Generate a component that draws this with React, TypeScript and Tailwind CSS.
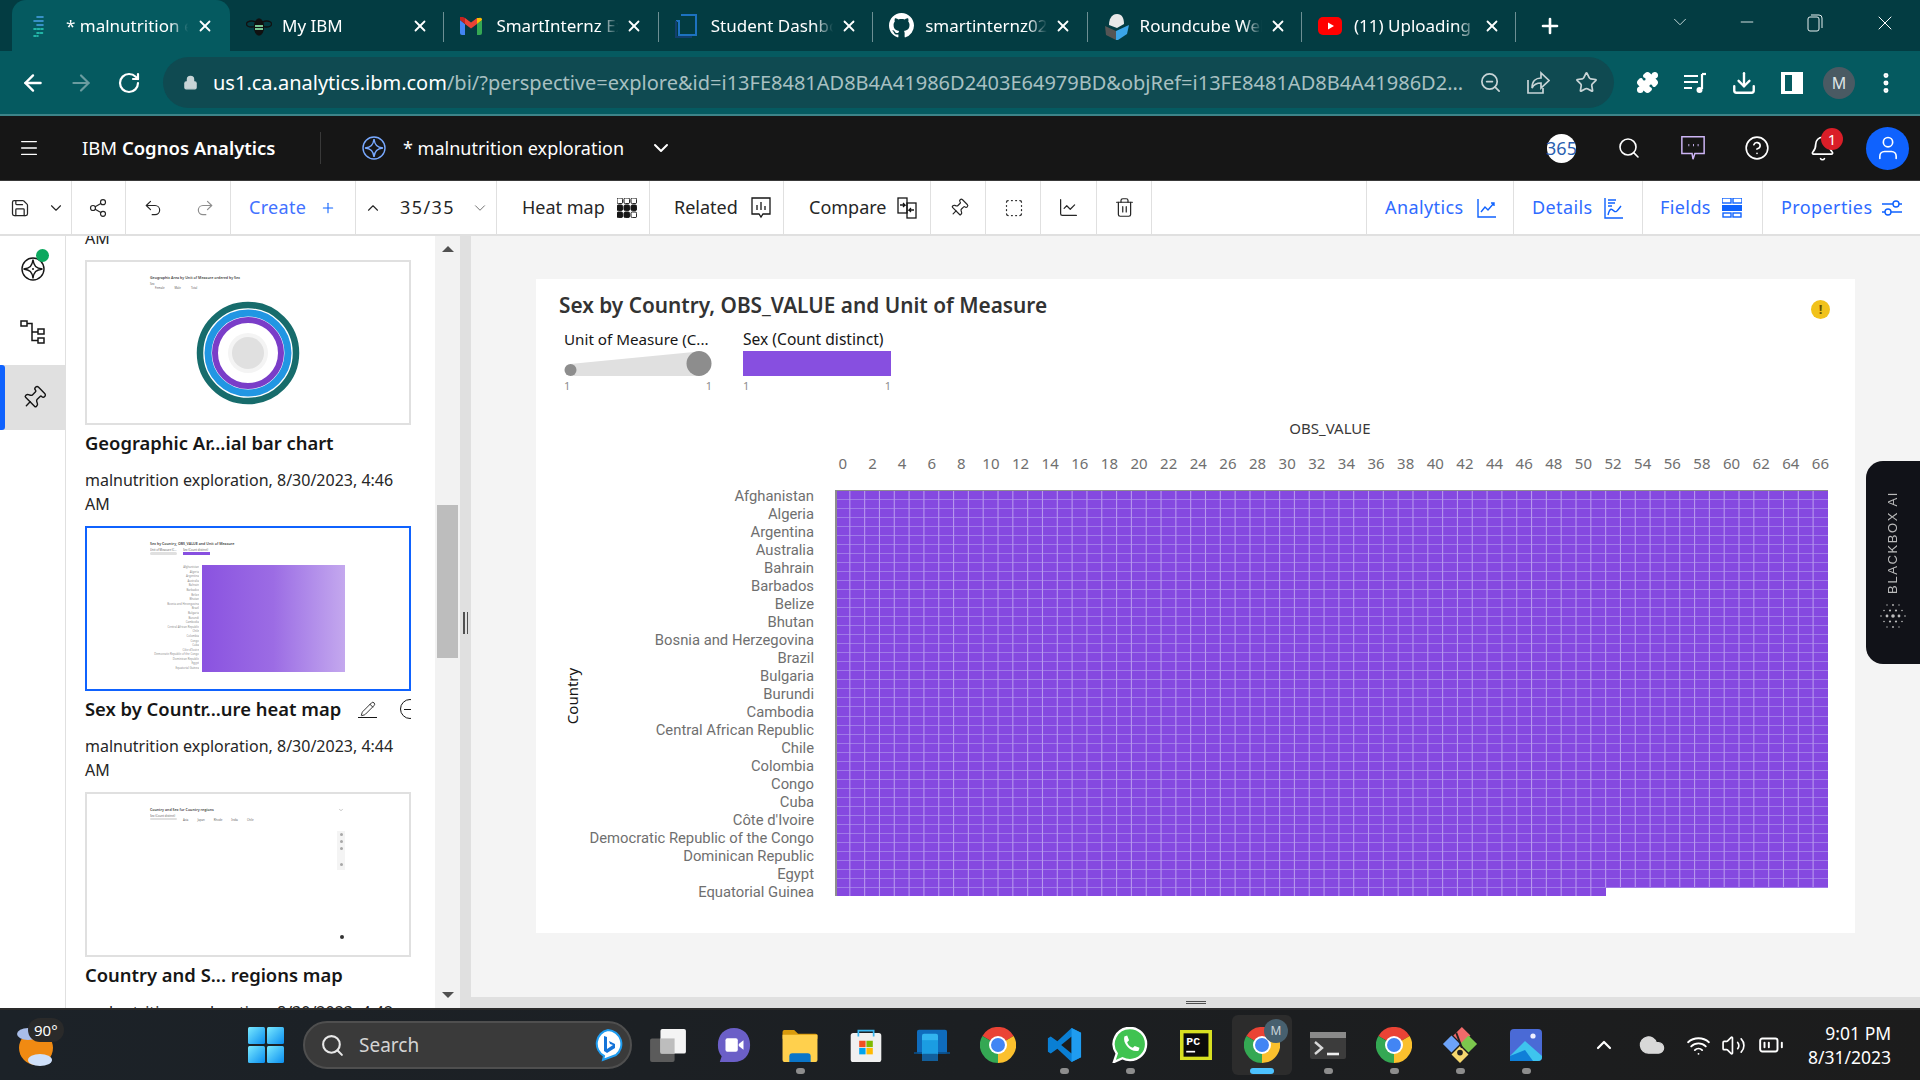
import React from "react";
import {
  ArrowLeft, ArrowRight, RotateCw, Lock, ZoomOut, Star, Puzzle, Download, MoreVertical, Menu, ChevronDown, ChevronUp,
  Search, HelpCircle, Bell, User, Share2, Undo2, Redo2, Plus, Pin, SquareDashed, ChartLine, Trash2, X, Minus,
  Save, Pencil, Wifi, Volume2, BatteryMedium, Cloud,
} from "lucide-react";

const countries = ["Afghanistan","Algeria","Argentina","Australia","Bahrain","Barbados","Belize","Bhutan","Bosnia and Herzegovina","Brazil","Bulgaria","Burundi","Cambodia","Central African Republic","Chile","Colombia","Congo","Cuba","Côte d'Ivoire","Democratic Republic of the Congo","Dominican Republic","Egypt","Equatorial Guinea"];

function ChromeLogo({ size = 36 }: { size?: number }) {
  return (
    <svg width={size} height={size} viewBox="0 0 32 32">
      <path d="M16 16 L2.1 8 A16 16 0 0 1 29.9 8 Z" fill="#ea4335" />
      <path d="M16 16 L29.9 8 A16 16 0 0 1 16 32 Z" fill="#fbc02d" />
      <path d="M16 16 L16 32 A16 16 0 0 1 2.1 8 Z" fill="#34a853" />
      <circle cx="16" cy="16" r="8" fill="#fff" />
      <circle cx="16" cy="16" r="6.2" fill="#4285f4" />
    </svg>
  );
}

function CognosFav() {
  return (
    <svg width="16" height="22" viewBox="0 0 16 22" fill="none" strokeLinecap="round" strokeWidth="1.6">
      <path d="M6 2h6M3 6h9M6 10h6" stroke="#4aa3e8" />
      <path d="M3 14h9M6 18h6M3 21h4" stroke="#2dd4bf" strokeDasharray="2 1.5" />
    </svg>
  );
}

function Bee() {
  return (
    <svg width="26" height="22" viewBox="0 0 26 22" fill="none" stroke="#111" strokeWidth="1.3">
      <ellipse cx="13" cy="12" rx="4.5" ry="8" fill="#111" />
      <ellipse cx="5.5" cy="9" rx="5" ry="3" />
      <ellipse cx="20.5" cy="9" rx="5" ry="3" />
      <path d="M9 11h8M9 14h8" stroke="#9fb" />
    </svg>
  );
}

function Gmail() {
  return (
    <svg width="22" height="18" viewBox="0 0 22 18">
      <path d="M0 3v13a2 2 0 0 0 2 2h3V7z" fill="#4285f4" />
      <path d="M22 3v13a2 2 0 0 1-2 2h-3V7z" fill="#34a853" />
      <path d="M0 3l5 4v-6l-2-1A2 2 0 0 0 0 3z" fill="#c5221f" />
      <path d="M5 1v6l6 4.5L17 7V1l-6 4.5z" fill="#ea4335" />
      <path d="M17 1v6l5-4a2 2 0 0 0-3-2z" fill="#fbbc04" />
    </svg>
  );
}

function Dash() {
  return (
    <svg width="24" height="26" viewBox="0 0 24 26" fill="none" stroke="#1d72c0" strokeWidth="2">
      <path d="M6 2h15v20H4V8H1" />
      <path d="M1 8v16h16" stroke="#123f6d" />
    </svg>
  );
}

function Github() {
  return (
    <svg width="25" height="25" viewBox="0 0 16 16" fill="#fff">
      <path d="M8 0C3.58 0 0 3.58 0 8c0 3.54 2.29 6.53 5.47 7.59.4.07.55-.17.55-.38 0-.19-.01-.82-.01-1.49-2.01.37-2.53-.49-2.69-.94-.09-.23-.48-.94-.82-1.13-.28-.15-.68-.52-.01-.53.63-.01 1.08.58 1.23.82.72 1.21 1.87.87 2.33.66.07-.52.28-.87.51-1.07-1.78-.2-3.64-.89-3.64-3.95 0-.87.31-1.59.82-2.15-.08-.2-.36-1.02.08-2.12 0 0 .67-.21 2.2.82.64-.18 1.32-.27 2-.27s1.36.09 2 .27c1.53-1.04 2.2-.82 2.2-.82.44 1.1.16 1.92.08 2.12.51.56.82 1.27.82 2.15 0 3.07-1.87 3.75-3.65 3.95.29.25.54.73.54 1.48 0 1.07-.01 1.93-.01 2.2 0 .21.15.46.55.38A8.01 8.01 0 0 0 16 8c0-4.42-3.58-8-8-8z" />
    </svg>
  );
}

function Round() {
  return (
    <svg width="26" height="28" viewBox="0 0 26 28">
      <path d="M13 2c6 0 7 6 7 10l-7 4-8-3C5 8 7 2 13 2z" fill="#e8e8e8" />
      <path d="M1 14l11 5v9L2 23z" fill="#555" />
      <path d="M12 19l13-6-2 9-9 6h-2z" fill="#3ba5e8" />
    </svg>
  );
}

function YouTube() {
  return (
    <svg width="24" height="18" viewBox="0 0 24 18">
      <rect width="24" height="18" rx="5" fill="#f00" />
      <path d="M10 5.5l6 3.5-6 3.5z" fill="#fff" />
    </svg>
  );
}

function Tab({ icon, title, active, sep = true }: { icon: React.ReactNode; title: string; active?: boolean; sep?: boolean }) {
  return (
    <div className={active ? "relative w-[218px] h-[51px] mt-0 flex items-center bg-[#055a60] rounded-t-[14px]" : "relative w-[214.4px] h-[51px] flex items-center"}>
      <div className={active ? "w-[54px] pl-[19px] flex items-center shrink-0" : "w-[52px] pl-[16px] flex items-center shrink-0"}>{icon}</div>
      <div className="w-[126px] overflow-hidden whitespace-nowrap text-[17px] text-white [mask-image:linear-gradient(to_right,black_82%,transparent_97%)]">{title}</div>
      <X size={18} strokeWidth={2.4} className={active ? "ml-[4px] text-white" : "ml-[3px] text-white"} />
      {sep && !active && <div className="absolute right-0 top-[12px] h-[30px] w-px bg-[#6d8f93]" />}
    </div>
  );
}

function HeatIcon() {
  const d = [0, 1, 2];
  return (
    <svg width="20" height="20" viewBox="0 0 20 20">
      {d.map((r) => d.map((c) => (
        <rect key={`${r}${c}`} x={c * 7} y={r * 7} width="5.6" height="5.6" rx="1.4" fill={r === 1 || (r === 2 && c < 2) ? "#161616" : "none"} stroke="#161616" strokeWidth="1" />
      )))}
    </svg>
  );
}

function RelatedIcon() {
  return (
    <svg width="20" height="22" viewBox="0 0 20 22" fill="none" stroke="#161616" strokeWidth="1.3">
      <path d="M1 1h18v16H12l-2 3-2-3H1z" />
      <path d="M6 13V8M10 13V5M14 13V9" />
    </svg>
  );
}

function CompareIcon() {
  return (
    <svg width="20" height="22" viewBox="0 0 20 22" fill="none" stroke="#161616" strokeWidth="1.3">
      <rect x="1" y="1" width="9" height="15" />
      <rect x="10" y="6" width="9" height="15" />
      <path d="M3 8h5l-2-2M8 8l-2 2M17 13h-5l2-2M12 13l2 2" />
    </svg>
  );
}

function ToolCell({ w, children, line = true }: { w: string; children: React.ReactNode; line?: boolean }) {
  return <div className={`${w} ${line ? "border-r border-[#e0e0e0]" : ""} h-full flex items-center shrink-0`}>{children}</div>;
}

function AnalyticsIcon() {
  return (
    <svg width="20" height="20" viewBox="0 0 20 20" fill="none" stroke="#0f62fe" strokeWidth="1.4">
      <path d="M1 1v18h18" />
      <path d="M4 14l4-5 3 3 6-7M14 5h3v3" />
    </svg>
  );
}

function DetailsIcon() {
  return (
    <svg width="20" height="22" viewBox="0 0 20 22" fill="none" stroke="#0f62fe" strokeWidth="1.4">
      <path d="M1 1v20h18" />
      <path d="M4 3h8M4 6h7M4 9h4M4 18c2-8 4-6 6-4s4-1 7-5" />
    </svg>
  );
}

function FieldsIcon() {
  return (
    <svg width="20" height="20" viewBox="0 0 20 20">
      <rect x="0" y="0" width="9" height="5" fill="none" stroke="#0f62fe" strokeWidth="1.4" />
      <rect x="11" y="0" width="9" height="5" fill="none" stroke="#0f62fe" strokeWidth="1.4" />
      <rect x="0" y="7" width="20" height="6" fill="#0f62fe" />
      <rect x="1" y="15" width="8" height="4" fill="none" stroke="#0f62fe" strokeWidth="1.4" />
      <rect x="11" y="15" width="8" height="4" fill="none" stroke="#0f62fe" strokeWidth="1.4" />
    </svg>
  );
}

function PropertiesIcon() {
  return (
    <svg width="20" height="18" viewBox="0 0 20 18" fill="none" stroke="#0f62fe" strokeWidth="1.4">
      <path d="M0 5h11M17 5h3" />
      <circle cx="14" cy="5" r="3" />
      <path d="M0 13h3M9 13h11" />
      <circle cx="6" cy="13" r="3" />
    </svg>
  );
}

function Heatmap() {
  const W = 14.82;
  const H = 9.02;
  const v = Array.from({ length: 66 }, (_, i) => (i + 1) * W);
  const h = Array.from({ length: 44 }, (_, i) => Math.round((i + 1) * H) + 0.5);
  return (
    <svg width="993" height="407" viewBox="0 0 993 407" className="block">
      <path d="M0 0H993V397H771V406H0Z" fill="#8549e0" />
      {h.map((y) => (
        <line key={y} x1={0} x2={993} y1={y} y2={y} stroke="#a07ae8" strokeWidth="1" />
      ))}
      {v.map((x, i) => (
        <line key={x} x1={x} x2={x} y1={0} y2={i < 51 ? 406 : 397} stroke="#b797ee" strokeWidth="1.1" />
      ))}
      <rect x="0" y="0" width="2" height="406" fill="#8d8d8d" />
      <rect x="0" y="0" width="993" height="1" fill="#8d8d8d" />
    </svg>
  );
}

function Thumb({ selected, children }: { selected?: boolean; children: React.ReactNode }) {
  return <div className={selected ? "w-[326px] h-[165px] border-2 border-[#0f62fe] bg-white overflow-hidden" : "w-[326px] h-[165px] border-2 border-[#e0e0e0] bg-white overflow-hidden"}>{children}</div>;
}

function Thumb1() {
  return (
    <div className="pl-[63px] pt-[13px] relative h-full">
      <div className="text-[3.6px] leading-[5px] font-semibold text-[#444] whitespace-nowrap">Geographic Area by Unit of Measure ordered by Sex</div>
      <div className="text-[2.8px] leading-[4px] text-[#666] mt-[2px]">Sex</div>
      <div className="text-[2.8px] leading-[4px] text-[#666] flex gap-[10px] pl-[5px]"><span>Female</span><span>Male</span><span>Total</span></div>
      <svg width="104" height="104" viewBox="0 0 104 104" className="absolute left-[109px] top-[39px]">
        <circle cx="52" cy="52" r="48" fill="none" stroke="#176c6c" strokeWidth="6.5" />
        <circle cx="52" cy="52" r="40" fill="none" stroke="#2196e3" strokeWidth="7" />
        <circle cx="52" cy="52" r="33" fill="none" stroke="#7a3dc8" strokeWidth="6" />
        <circle cx="52" cy="52" r="20" fill="#f4f4f4" />
        <circle cx="52" cy="52" r="16" fill="#e0e0e0" />
      </svg>
    </div>
  );
}

function Thumb2() {
  return (
    <div className="pl-[63px] pt-[13px]">
      <div className="text-[3.6px] leading-[5px] font-semibold text-[#444] whitespace-nowrap">Sex by Country, OBS_VALUE and Unit of Measure</div>
      <div className="flex gap-[6px] mt-[2px]">
        <div className="w-[27px] text-[2.8px] leading-[4px] text-[#666] whitespace-nowrap overflow-hidden">Unit of Measure (C...<div className="h-[3px] bg-[#e0e0e0] rounded-full" /></div>
        <div className="w-[27px] text-[2.8px] leading-[4px] text-[#666] whitespace-nowrap overflow-hidden">Sex (Count distinct)<div className="h-[3px] bg-[#874fe0]" /></div>
      </div>
      <div className="flex mt-[10px]">
        <div className="w-[49px] text-right text-[2.8px] leading-[4.6px] text-[#8d8d8d] whitespace-nowrap h-[107px] overflow-hidden">
          {countries.map((c) => <div key={c}>{c}</div>)}
        </div>
        <div className="ml-[3px] w-[143px] h-[107px] bg-gradient-to-r from-[#8a52e0] via-[#9c6ce4] to-[#c4a8ee]" />
      </div>
    </div>
  );
}

function Thumb3() {
  return (
    <div className="pl-[63px] pt-[13px] relative h-full">
      <div className="text-[3.6px] leading-[5px] font-semibold text-[#444] whitespace-nowrap">Country and Sex for Country regions</div>
      <div className="flex gap-[6px] mt-[2px] text-[2.8px] leading-[4px] text-[#666]">
        <div className="w-[27px] whitespace-nowrap overflow-hidden">Sex (Count distinct)<div className="h-[2px] bg-[#e0e0e0] rounded-full" /></div>
        <div className="flex gap-[9px] pt-[4px] whitespace-nowrap"><span>Asia</span><span>Japan</span><span>Rhode</span><span>India</span><span>Chile</span></div>
      </div>
      <ChevronDown size={6} strokeWidth={2} className="absolute left-[251px] top-[13px] text-[#8d8d8d]" />
      <div className="absolute left-[250px] top-[37px] w-[8px] h-[39px] bg-[#f4f4f4] flex flex-col items-center gap-[4px] pt-[2px]">
        <div className="w-[3px] h-[3px] rounded-full bg-[#a8a8a8]" />
        <div className="w-[3px] h-[3px] rounded-full bg-[#a8a8a8]" />
        <div className="w-[3px] h-[3px] rounded-full bg-[#a8a8a8]" />
        <div className="w-[3px] h-[3px] rounded-full bg-[#a8a8a8] mt-[9px]" />
      </div>
      <div className="absolute left-[253px] top-[141px] w-[4px] h-[4px] rounded-full bg-[#333]" />
    </div>
  );
}

function PanelItem({ title, meta, selected, children }: { title: string; meta: string; selected?: boolean; children: React.ReactNode }) {
  return (
    <div className="w-[326px]">
      <Thumb selected={selected}>{children}</Thumb>
      <div className="mt-[6px] h-[24px] flex items-center text-[18.4px] font-semibold leading-[24px] text-[#161616] whitespace-nowrap">
        <span className="w-[273px] shrink-0">{title}</span>
        {selected && (
          <span className="flex items-center overflow-hidden w-[53px]">
            <span className="flex flex-col items-center shrink-0"><Pencil size={16} strokeWidth={1.3} className="text-[#161616]" /><span className="block w-[19px] h-px bg-[#161616]" /></span>
            <span className="ml-[23px] w-[20px] h-[20px] shrink-0 rounded-full border-[1.5px] border-[#161616] flex items-center"><span className="ml-[3px] w-[11px] h-px bg-[#161616]" /></span>
          </span>
        )}
      </div>
      <div className="mt-[13px] text-[16px] leading-[24px] text-[#262626]">{meta}</div>
    </div>
  );
}

function TBCell({ children, dot, active }: { children: React.ReactNode; dot?: boolean; active?: boolean }) {
  return (
    <div className="relative w-[66px] h-[60px] shrink-0 flex items-center justify-center">
      {active && <div className="absolute left-[3px] top-0 w-[60px] h-[60px] rounded-[6px] bg-[#2c2c2c]" />}
      <div className="relative">{children}</div>
      {dot && <div className="absolute bottom-[1px] left-[29px] w-[9px] h-[6px] rounded-full bg-[#8d8d8d]" />}
      {active && <div className="absolute bottom-[1px] left-[21px] w-[24px] h-[6px] rounded-full bg-[#4cc2ff]" />}
    </div>
  );
}

function Taskbar() {
  return (
    <div className="h-[72px] shrink-0 flex items-center bg-gradient-to-r from-[#1c2228] via-[#1c1f22] to-[#1c1c1c] border-t-2 border-[#2a2a2a] text-white font-['Noto_Sans',sans-serif]">
      <div className="w-[248px] h-full relative shrink-0">
        <svg width="40" height="42" viewBox="0 0 40 42" className="absolute left-[14px] top-[16px]">
          <circle cx="22" cy="22" r="17" fill="#f08a12" />
          <ellipse cx="14" cy="8" rx="11" ry="6" fill="#a9bde8" />
          <ellipse cx="26" cy="34" rx="12" ry="6" fill="#cfe0fa" />
        </svg>
        <div className="absolute left-[28px] top-[8px] h-[24px] px-[6px] rounded-full bg-[#2a2a2a] text-[15px] leading-[24px]">90°</div>
      </div>
      <svg width="36" height="36" viewBox="0 0 36 36" className="shrink-0">
        <defs>
          <linearGradient id="wl" x1="0" y1="0" x2="1" y2="1"><stop offset="0" stopColor="#7aeaff" /><stop offset="1" stopColor="#0a8ef0" /></linearGradient>
        </defs>
        <rect x="0" y="0" width="17" height="17" rx="1.5" fill="url(#wl)" />
        <rect x="19" y="0" width="17" height="17" rx="1.5" fill="url(#wl)" />
        <rect x="0" y="19" width="17" height="17" rx="1.5" fill="url(#wl)" />
        <rect x="19" y="19" width="17" height="17" rx="1.5" fill="url(#wl)" />
      </svg>
      <div className="ml-[19px] w-[329px] h-[48px] shrink-0 rounded-full bg-[#3a3a3a] border-2 border-[#4f4f4f] flex items-center pl-[15px] pr-[7px]">
        <Search size={25} strokeWidth={2} className="text-[#e8e8e8]" />
        <span className="ml-[14px] text-[19px] text-[#d4d4d4]">Search</span>
        <svg width="30" height="34" viewBox="0 0 30 34" className="ml-auto">
          <path d="M15 2a14 14 0 0 1 8 25l-13 5 1-4A14 14 0 0 1 15 2z" fill="#fff" stroke="#1f9cf0" strokeWidth="2" />
          <path d="M11 8l3 1v12l6-4-3-1-1-3 6 3v4l-8 5-3-2z" fill="#1473d8" />
        </svg>
      </div>
      <div className="ml-[3px] flex items-center shrink-0">
        <TBCell>
          <svg width="36" height="33" viewBox="0 0 38 35"><rect x="0" y="10" width="26" height="25" rx="2" fill="#5b5b5b" /><rect x="11" y="0" width="27" height="26" rx="2" fill="#f4f4f4" /><rect x="11" y="10" width="15" height="16" fill="#bdbdbd" /></svg>
        </TBCell>
        <TBCell>
          <svg width="34" height="36" viewBox="0 0 34 38"><path d="M17 1c10 0 17 7 17 18s-7 18-17 18H2l2-6C1 27 0 24 0 19 0 8 7 1 17 1z" fill="#6b5fc7" /><rect x="8" y="12" width="13" height="14" rx="2" fill="#fff" /><path d="M22 18l5-4v10l-5-4z" fill="#fff" /></svg>
        </TBCell>
        <TBCell dot>
          <svg width="36" height="33" viewBox="0 0 36 34"><path d="M0 3a2 2 0 0 1 2-2h10l4 4h18a2 2 0 0 1 2 2v3H0z" fill="#d99a0b" /><path d="M0 6h36v26a2 2 0 0 1-2 2H2a2 2 0 0 1-2-2z" fill="#ffd04d" /><path d="M7 34v-6a3 3 0 0 1 3-3h16a3 3 0 0 1 3 3v6z" fill="#0a75c8" /></svg>
        </TBCell>
        <TBCell>
          <svg width="36" height="34" viewBox="0 0 36 40"><rect y="6" width="36" height="34" rx="3" fill="#f0f0f0" /><path d="M9 10V3h18v7" fill="none" stroke="#38b6f0" strokeWidth="2" /><rect x="10" y="15" width="7.5" height="7.5" fill="#f25022" /><rect x="18.5" y="15" width="7.5" height="7.5" fill="#7fba00" /><rect x="10" y="23.5" width="7.5" height="7.5" fill="#00a4ef" /><rect x="18.5" y="23.5" width="7.5" height="7.5" fill="#ffb900" /></svg>
        </TBCell>
        <TBCell>
          <svg width="36" height="32" viewBox="0 0 36 40" preserveAspectRatio="none"><rect x="3" y="1" width="30" height="30" rx="2" fill="#0f6cbd" /><rect x="0" y="29" width="36" height="2" fill="#0b4f8a" /><rect x="8" y="6" width="16" height="34" rx="2" fill="#36bdf5" opacity="0.9" /><rect x="8" y="14" width="16" height="17" fill="#1b9de2" /><rect x="8" y="31" width="16" height="9" rx="1" fill="#125f9c" /></svg>
        </TBCell>
        <TBCell><ChromeLogo /></TBCell>
        <TBCell dot>
          <svg width="36" height="36" viewBox="0 0 36 38"><path d="M26 1l10 5v26l-10 5-15-14-7 5-3-2v-14l3-2 7 5z" fill="#0a7fd4" /><path d="M26 10L15 19l11 9z" fill="#1c1c1c" /><path d="M26 1l10 5v26l-10 5z" fill="#1f9cf0" /></svg>
        </TBCell>
        <TBCell dot>
          <svg width="36" height="36" viewBox="0 0 36 38"><path d="M18 1a17 17 0 0 1 0 34 17 17 0 0 1-8-2L1 37l3-9A17 17 0 0 1 18 1z" fill="#40c351" stroke="#fff" strokeWidth="2.5" /><path d="M12 10l3-1 2 5-2 2c1 3 3 5 6 6l2-2 5 2-1 3c-8 2-17-7-15-15z" fill="#fff" /></svg>
        </TBCell>
        <TBCell>
          <svg width="32" height="30" viewBox="0 0 36 36" preserveAspectRatio="none"><rect x="0" y="0" width="36" height="36" fill="#d7e021" /><rect x="4" y="4" width="28" height="28" fill="#0b0b0b" /><text x="7" y="18" fill="#fff" fontSize="13" fontFamily="Liberation Mono" fontWeight="700">PC</text><rect x="7" y="25" width="10" height="2" fill="#fff" /></svg>
        </TBCell>
        <TBCell active>
          <div className="relative"><ChromeLogo /><div className="absolute left-[20px] top-[-8px] w-[24px] h-[24px] rounded-full bg-[#47606f] text-[12px] leading-[24px] text-center text-[#cbd5db]">M</div></div>
        </TBCell>
        <TBCell dot>
          <svg width="36" height="27" viewBox="0 0 36 27" fill="none"><rect width="36" height="27" rx="2" fill="#3c3c3c" /><rect width="36" height="6" fill="#8a8a8a" /><path d="M5 10l7 6-7 6" stroke="#d8d8d8" strokeWidth="2.4" /><path d="M17 22h12" stroke="#eee" strokeWidth="2.6" /></svg>
        </TBCell>
        <TBCell dot><ChromeLogo /></TBCell>
        <TBCell dot>
          <svg width="36" height="36" viewBox="0 0 36 38"><path d="M18 18L9 9l9-9 9 9z" fill="#f06a6a" transform="translate(2 0)" /><path d="M18 18L9 27 0 18l9-9z" fill="#6da3f8" /><path d="M18 18l9-9 9 9-9 9z" fill="#7cc84d" /><path d="M18 20l9 9-9 9-9-9z" fill="#f5d76e" /><path d="M14 6l6 16" stroke="#222" strokeWidth="2" /><circle cx="18" cy="27" r="3" fill="#222" /></svg>
        </TBCell>
        <TBCell dot>
          <svg width="32" height="32" viewBox="0 0 32 32"><rect width="32" height="32" rx="4" fill="#4a6ad6" /><circle cx="23" cy="7" r="2.6" fill="#f0f0ff" /><path d="M0 27l15-15 17 15v1a4 4 0 0 1-4 4H4a4 4 0 0 1-4-4z" fill="#3ec4ee" /><path d="M0 32V27l15-6 8 11z" fill="#0f7fd8" /></svg>
        </TBCell>
      </div>
      <div className="ml-[33px] flex items-center shrink-0">
        <ChevronUp size={24} strokeWidth={2.2} className="text-white" />
        <Cloud size={28} className="ml-[22px] text-[#d8d8d8]" fill="#d8d8d8" strokeWidth={1} />
        <Wifi size={25} className="ml-[20px] text-white" strokeWidth={1.8} />
        <Volume2 size={25} className="ml-[10px] text-white" strokeWidth={1.6} />
        <BatteryMedium size={26} className="ml-[12px] text-white" strokeWidth={1.8} />
      </div>
      <div className="ml-[24px] text-right text-[17.5px] leading-[24px] text-white whitespace-nowrap">
        <div>9:01 PM</div>
        <div>8/31/2023</div>
      </div>
    </div>
  );
}

export default function App() {
  const axis = Array.from({ length: 34 }, (_, i) => i * 2);
  return (
    <div className="w-[1920px] h-[1080px] overflow-hidden flex flex-col bg-white font-['Noto_Sans',sans-serif]">
      {/* tab strip */}
      <div className="h-[51px] shrink-0 bg-[#033c42] flex pl-[12px]">
        <Tab active icon={<CognosFav />} title="* malnutrition exploration" />
        <Tab icon={<Bee />} title="My IBM" />
        <Tab icon={<Gmail />} title="SmartInternz Externship" />
        <Tab icon={<Dash />} title="Student Dashboard" />
        <Tab icon={<Github />} title="smartinternz02/" />
        <Tab icon={<Round />} title="Roundcube Webmail" />
        <Tab icon={<YouTube />} title="(11) Uploading" />
        <Plus size={24} strokeWidth={2.6} className="ml-[22px] mt-[14px] text-white" />
        <ChevronDown size={22} strokeWidth={1} className="ml-[107px] mt-[11px] text-[#cfe0e0]" />
        <Minus size={20} strokeWidth={1} className="ml-[46px] mt-[12px] text-white" />
        <svg width="16" height="18" viewBox="0 0 16 18" fill="none" stroke="#e8f0f0" strokeWidth="1" className="ml-[50px] mt-[14px]"><rect x="1" y="3" width="11" height="14" rx="2" /><path d="M4 1h8a3 3 0 0 1 3 3v10" /></svg>
        <X size={24} strokeWidth={1} className="ml-[50px] mt-[11px] text-white" />
      </div>
      {/* chrome toolbar */}
      <div className="h-[63px] shrink-0 bg-[#055a60] flex items-center text-white">
        <ArrowLeft size={26} strokeWidth={2.2} className="ml-[20px]" />
        <ArrowRight size={26} strokeWidth={2} className="ml-[22px] text-[#6b9ca0]" />
        <RotateCw size={24} strokeWidth={2.2} className="ml-[23px]" />
        <div className="ml-[22px] w-[1451px] h-[51px] rounded-full bg-[#0f4a51] flex items-center pl-[20px]">
          <Lock size={15} fill="#c8d4d6" className="text-[#c8d4d6]" />
          <div className="ml-[15px] w-[1252px] overflow-hidden whitespace-nowrap text-[20px] text-[#a8c0c2]">
            <span className="text-white">us1.ca.analytics.ibm.com</span>/bi/?perspective=explore&amp;id=i13FE8481AD8B4A41986D2403E64979BD&amp;objRef=i13FE8481AD8B4A41986D2...
          </div>
          <ZoomOut size={23} strokeWidth={1.8} className="ml-[14px] text-[#c8d4d6]" />
          <svg width="24" height="24" viewBox="0 0 24 24" fill="none" stroke="#c8d4d6" strokeWidth="1.7" className="ml-[24px]"><path d="M2 9v13h15v-5" /><path d="M6 17c0-7 4-10 9-10V2l8 7.500-8 7.500v-5c-4 0-7 1-9 5z" /></svg>
          <Star size={23} strokeWidth={1.8} className="ml-[25px] text-[#c8d4d6]" />
        </div>
        <Puzzle size={23} fill="#fff" className="ml-[22px]" />
        <svg width="24" height="24" viewBox="0 0 24 24" fill="none" stroke="#fff" strokeWidth="2.2" className="ml-[24px]"><path d="M1 5h14M1 11h14M1 17h8" /><path d="M19 3v15" /><circle cx="16.5" cy="19" r="3" fill="#fff" stroke="none" /><path d="M19 3h4" /></svg>
        <Download size={26} strokeWidth={2.2} className="ml-[24px]" />
        <svg width="22" height="22" viewBox="0 0 22 22" className="ml-[24px]"><path fillRule="evenodd" d="M0 0h22v22H0zM4 3v16h7V3z" fill="#fff" /></svg>
        <div className="ml-[20px] w-[32px] h-[32px] rounded-full bg-[#4a5a63] text-[16px] leading-[32px] text-center text-[#dfe5e8]">M</div>
        <MoreVertical size={26} strokeWidth={2.6} className="ml-[18px]" />
      </div>
      <div className="h-[2px] shrink-0 bg-[#3d8489]" />
      {/* Cognos header */}
      <div className="h-[65px] shrink-0 bg-[#161616] flex items-center text-white border-b border-[#393939]">
        <Menu size={22} strokeWidth={1.5} className="ml-[18px]" />
        <div className="ml-[42px] w-[238px] text-[18.5px] whitespace-nowrap">IBM <span className="font-semibold">Cognos Analytics</span></div>
        <div className="w-px h-[32px] bg-[#393939]" />
        <div className="ml-[41px]"><svg width="24" height="24" viewBox="0 0 24 24" fill="none" stroke="#78a9ff" strokeWidth="1.4"><circle cx="12" cy="12" r="11" /><path d="M12 3c.8 6 3 8.200 9 9-6 .8-8.200 3-9 9-.8-6-3-8.200-9-9 6-.8 8.200-3 9-9z" /></svg></div>
        <div className="ml-[17px] text-[18px] whitespace-nowrap w-[246px]">* malnutrition exploration</div>
        <ChevronDown size={24} strokeWidth={2} />
        <div className="ml-auto flex items-center">
          <div className="w-[29px] h-[29px] rounded-full bg-white text-[#2b5fb0] text-[18px] leading-[29px] flex justify-center whitespace-nowrap">365</div>
          <Search size={24} strokeWidth={1.6} className="ml-[41px]" />
          <svg width="26" height="26" viewBox="0 0 26 28" fill="none" stroke="#cdb5f5" strokeWidth="1.6" className="ml-[39px]"><path d="M1 2h24v18H15l-2 6-1-6H1z" /><path d="M8 11h1M13 11h1M18 11h1" strokeWidth="2.4" /></svg>
          <HelpCircle size={26} strokeWidth={1.5} className="ml-[38px]" />
          <div className="relative ml-[39px]">
            <Bell size={27} strokeWidth={1.5} />
            <div className="absolute left-[12px] top-[-7px] w-[22px] h-[22px] rounded-full bg-[#da1e28] text-[15px] leading-[22px] text-center">1</div>
          </div>
          <div className="ml-[30px] mr-[11px] w-[43px] h-[43px] rounded-full bg-[#0f62fe] flex items-center justify-center"><User size={28} strokeWidth={1.4} /></div>
        </div>
      </div>
      {/* toolbar */}
      <div className="h-[55px] shrink-0 bg-white flex items-center border-b-2 border-[#e0e0e0] text-[18px] text-[#262626]">
        <ToolCell w="w-[72px]">
          <Save size={20} strokeWidth={1.5} className="ml-[10px]" />
          <ChevronDown size={18} strokeWidth={1.5} className="ml-[17px]" />
        </ToolCell>
        <ToolCell w="w-[54px]"><Share2 size={20} strokeWidth={1.4} className="ml-[16px]" /></ToolCell>
        <ToolCell w="w-[105px]">
          <Undo2 size={20} strokeWidth={1.4} className="ml-[17px]" />
          <Redo2 size={20} strokeWidth={1.4} className="ml-[32px] text-[#8d8d8d]" />
        </ToolCell>
        <ToolCell w="w-[125px]">
          <span className="ml-[18px] text-[#4272ff] tracking-[0.3px]">Create</span>
          <Plus size={16} strokeWidth={1.6} className="ml-[14px] text-[#0f62fe]" />
        </ToolCell>
        <ToolCell w="w-[141px]">
          <ChevronUp size={18} strokeWidth={1.5} className="ml-[8px]" />
          <span className="ml-[18px] tracking-[1.4px]">35/35</span>
          <ChevronDown size={18} strokeWidth={1.3} className="ml-[16px] text-[#6f6f6f]" />
        </ToolCell>
        <ToolCell w="w-[153px]"><span className="ml-[25px] w-[95px]">Heat map</span><HeatIcon /></ToolCell>
        <ToolCell w="w-[134px]"><span className="ml-[24px] w-[77px]">Related</span><RelatedIcon /></ToolCell>
        <ToolCell w="w-[147px]"><span className="ml-[25px] w-[88px]">Compare</span><CompareIcon /></ToolCell>
        <ToolCell w="w-[55px]"><Pin size={20} strokeWidth={1.4} className="ml-[18px] rotate-45" /></ToolCell>
        <ToolCell w="w-[55px]"><SquareDashed size={20} strokeWidth={1.5} className="ml-[18px]" /></ToolCell>
        <ToolCell w="w-[56px]"><ChartLine size={21} strokeWidth={1.4} className="ml-[17px]" /></ToolCell>
        <ToolCell w="w-[55px]"><Trash2 size={21} strokeWidth={1.4} className="ml-[17px]" /></ToolCell>
        <div className="w-[215px] h-full border-r border-[#e0e0e0]" />
        <div className="flex h-full items-center text-[#2f6bff] tracking-[0.4px]">
          <ToolCell w="w-[147px]"><span className="ml-[18px] w-[92px]">Analytics</span><AnalyticsIcon /></ToolCell>
          <ToolCell w="w-[129px]"><span className="ml-[18px] w-[72px]">Details</span><DetailsIcon /></ToolCell>
          <ToolCell w="w-[120px]"><span className="ml-[17px] w-[62px]">Fields</span><FieldsIcon /></ToolCell>
          <ToolCell w="w-[157px]" line={false}><span className="ml-[18px] w-[101px]">Properties</span><PropertiesIcon /></ToolCell>
        </div>
      </div>
      {/* body */}
      <div className="flex-1 min-h-0 flex">
        <div className="w-[66px] shrink-0 border-r border-[#e0e0e0] flex flex-col">
          <div className="h-[65px] flex items-center justify-center">
            <div className="relative"><svg width="24" height="24" viewBox="0 0 24 24" fill="none" stroke="#161616" strokeWidth="1.4"><circle cx="12" cy="12" r="11" /><path d="M12 2.500c.8 6.500 3 8.700 9.500 9.500-6.500.8-8.700 3-9.500 9.500-.8-6.500-3-8.700-9.500-9.500 6.500-.8 8.700-3 9.500-9.500z" /><circle cx="12" cy="12" r="1" fill="#161616" stroke="none" /></svg><div className="absolute left-[15px] top-[-8px] w-[13px] h-[13px] rounded-full bg-[#0ca85f]" /></div>
          </div>
          <div className="h-[64px] flex items-center justify-center pb-[2px]">
            <svg width="26" height="26" viewBox="0 0 26 26" fill="none" stroke="#161616" strokeWidth="1.5"><rect x="1" y="2" width="6" height="5" /><path d="M7 4.500h5v17h6M12 13h6" /><rect x="18" y="10" width="6" height="5" /><rect x="18" y="19" width="6" height="5" /></svg>
          </div>
          <div className="h-[65px] bg-[#e0e0e0] flex items-center justify-center relative">
            <div className="absolute left-0 top-0 w-[5px] h-[65px] rounded-r-[3px] bg-[#0f62fe]" />
            <Pin size={26} strokeWidth={1.3} className="ml-[2px] rotate-45 text-[#161616]" />
          </div>
        </div>
        <div className="w-[369px] shrink-0 overflow-hidden pl-[19px]">
          <div className="h-[24px] -mt-[10px] text-[16px] leading-[24px] text-[#262626]">AM</div>
          <div className="mt-[10px] flex flex-col gap-[10px]">
            <PanelItem title="Geographic Ar...ial bar chart" meta="malnutrition exploration, 8/30/2023, 4:46 AM"><Thumb1 /></PanelItem>
            <PanelItem selected title="Sex by Countr...ure heat map" meta="malnutrition exploration, 8/30/2023, 4:44 AM"><Thumb2 /></PanelItem>
            <PanelItem title="Country and S... regions map" meta="malnutrition exploration, 8/30/2023, 4:42 AM"><Thumb3 /></PanelItem>
          </div>
        </div>
        <div className="w-[25px] shrink-0 bg-[#f2f2f2] flex flex-col items-center">
          <div className="mt-[10px] w-0 h-0 border-l-[6px] border-r-[6px] border-b-[6px] border-l-transparent border-r-transparent border-b-[#505050]" />
          <div className="mt-[253px] w-[21px] h-[153px] bg-[#bdbdbd]" />
          <div className="mt-auto mb-[10px] w-0 h-0 border-l-[6px] border-r-[6px] border-t-[6px] border-l-transparent border-r-transparent border-t-[#505050]" />
        </div>
        <div className="w-[11px] shrink-0 bg-[#e0e0e0] flex justify-center pt-[376px] gap-[2px]">
          <div className="w-[1.5px] h-[22px] bg-[#505050]" />
          <div className="w-[1.5px] h-[22px] bg-[#505050]" />
        </div>
        <div className="flex-1 min-w-0 flex flex-col bg-[#f4f4f4]">
          <div className="flex-1 min-h-0 relative pl-[65px] pt-[43px]">
            <div className="w-[1319px] h-[654px] bg-white pl-[23px] pt-[14px] relative text-[#161616]">
              <div className="text-[20.8px] leading-[24px] font-semibold text-[#333] whitespace-nowrap">Sex by Country, OBS_VALUE and Unit of Measure</div>
              <div className="flex ml-[5px] mt-[13px]">
                <div className="w-[179px]">
                  <div className="text-[15.2px] leading-[18px] pb-[3px] whitespace-nowrap">Unit of Measure (C...</div>
                  <svg width="148" height="26" viewBox="0 0 148 26" className="block"><path d="M6 13L135 0.500V25H6Z" fill="#e0e0e0" /><circle cx="6.500" cy="19" r="6" fill="#8d8d8d" /><circle cx="135" cy="12.500" r="12.500" fill="#8d8d8d" /></svg>
                  <div className="w-[148px] flex justify-between text-[11px] leading-[18px] text-[#8d8d8d]"><span>1</span><span>1</span></div>
                </div>
                <div className="w-[148px]">
                  <div className="text-[15.6px] leading-[18px] pb-[3px] whitespace-nowrap">Sex (Count distinct)</div>
                  <div className="h-[25px] bg-[#874fe0]" />
                  <div className="flex justify-between text-[11px] leading-[19px] text-[#8d8d8d]"><span>1</span><span>1</span></div>
                </div>
              </div>
              <div className="ml-[771px] w-0 flex justify-center mt-[24px] text-[15px] leading-[18px] whitespace-nowrap text-[#393939]">OBS_VALUE</div>
              <div className="mt-[17px] ml-[269px] flex text-[15px] leading-[18px] text-[#6f6f6f]">
                {axis.map((n) => <div key={n} className="w-[29.64px] shrink-0 text-center">{n}</div>)}
              </div>
              <div className="flex mt-[18px]">
                <div className="w-[30px] shrink-0 flex items-center justify-center">
                  <div className="ml-[-4px] -rotate-90 text-[15px] leading-[18px] text-[#161616]">Country</div>
                </div>
                <div className="w-[225px] shrink-0 text-right text-[14.8px] leading-[18.03px] text-[#6f6f6f] whitespace-nowrap -mt-[3.5px] font-['Roboto',sans-serif]">
                  {countries.map((c) => <div key={c}>{c}</div>)}
                </div>
                <div className="ml-[21px]"><Heatmap /></div>
              </div>
              <div className="absolute left-[1275px] top-[21px] w-[19px] h-[19px] rounded-full bg-[#f1c21b] text-[13px] leading-[19px] font-bold text-center text-[#6b5200]">!</div>
            </div>
            <div className="absolute right-0 top-[225px] w-[54px] h-[203px] rounded-l-[17px] bg-[#111218] flex flex-col items-center pt-[30px]">
              <div className="[writing-mode:vertical-rl] rotate-180 text-[13px] tracking-[1.6px] leading-[16px] text-[#bbbbbb] font-['Liberation_Sans',sans-serif] whitespace-nowrap">BLACKBOX AI</div>
              <svg width="30" height="26" viewBox="0 0 30 26" fill="#bdbdbd" className="mt-[9px]">
                {[[15,13,1.8],[9,13,1.4],[21,13,1.4],[3,13,0.8],[27,13,0.8],[12,7.5,1.1],[18,7.5,1.1],[6,7.5,.8],[24,7.5,.8],[12,18.5,1.1],[18,18.5,1.1],[6,18.5,.8],[24,18.5,.8],[9,2,.7],[15,2,.9],[21,2,.7],[9,24,.7],[15,24,.9],[21,24,.7]].map(([x,y,r],i)=><circle key={i} cx={x} cy={y} r={r} />)}
              </svg>
            </div>
          </div>
          <div className="h-[11px] shrink-0 bg-[#e0e0e0] flex flex-col items-center justify-center gap-[1.5px]">
            <div className="w-[20px] h-px bg-[#505050]" />
            <div className="w-[20px] h-px bg-[#505050]" />
          </div>
        </div>
      </div>
      <Taskbar />
    </div>
  );
}
